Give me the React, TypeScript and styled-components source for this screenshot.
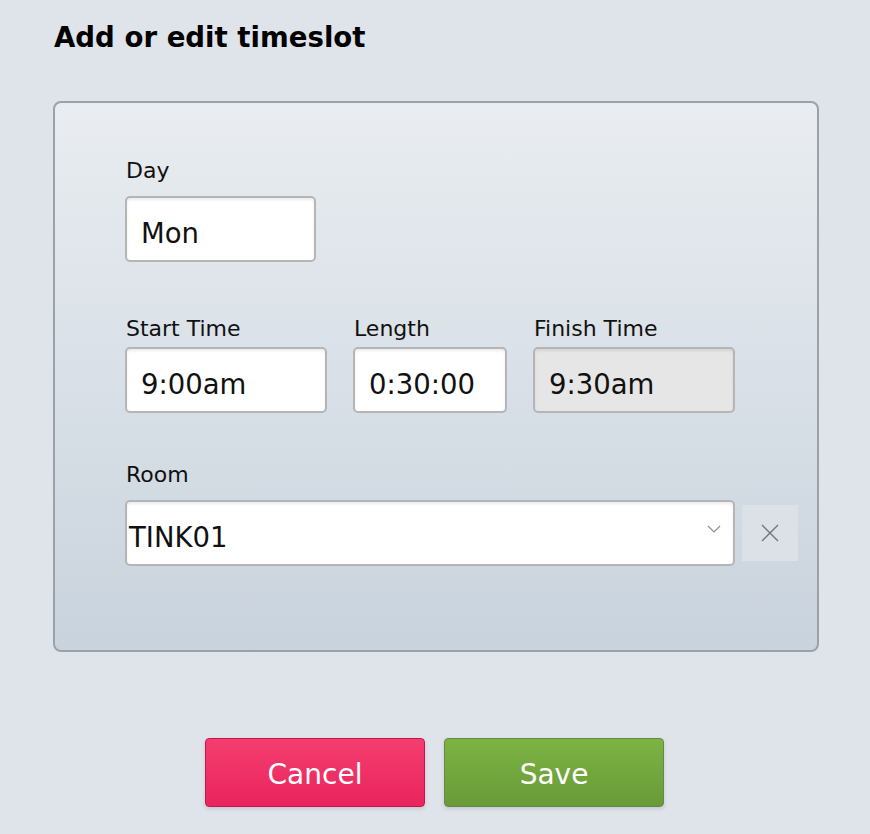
import styled, { createGlobalStyle } from 'styled-components';

const GlobalStyle = createGlobalStyle`
  html, body {
    margin: 0;
    padding: 0;
    background: #dfe3ea;
    font-family: 'DejaVu Sans', Verdana, sans-serif;
    color: #111;
  }
`;

const Page = styled.div`
  width: 870px;
  height: 834px;
  box-sizing: border-box;
  padding: 22px 51px 0 53px;
`;

const Title = styled.h1`
  margin: 0 0 0 1px;
  font-size: 27.6px;
  line-height: 32px;
  font-weight: bold;
  color: #000;
`;

const Panel = styled.div`
  margin-top: 47px;
  height: 551px;
  box-sizing: border-box;
  border: 2px solid #9aa1a8;
  border-radius: 8px;
  background: linear-gradient(to bottom, #e9edf1 0%, #c9d3dd 100%);
  padding: 53px 0 0 70px;
`;

const Row = styled.div<{ $top?: number }>`
  display: flex;
  align-items: flex-end;
  gap: 26px;
  margin-top: ${(p) => p.$top ?? 0}px;
`;

const Field = styled.div`
  display: flex;
  flex-direction: column;
`;

const Label = styled.label<{ $gap?: number }>`
  font-size: 22px;
  line-height: 26px;
  padding-top: 2px;
  margin: 0 0 ${(p) => p.$gap ?? 12}px 1px;
  color: #111;
`;

const Input = styled.div<{ $w: number; $disabled?: boolean }>`
  width: ${(p) => p.$w}px;
  height: 66px;
  box-sizing: border-box;
  border: 2px solid #b5b5b5;
  border-radius: 5px;
  background: ${(p) => (p.$disabled ? '#e6e6e6' : '#fff')};
  box-shadow: inset 0 2px 3px rgba(0, 0, 0, 0.08);
  display: flex;
  align-items: center;
  padding: 7px 14px 0;
  font-size: 27.5px;
  color: #111;
`;

const SelectRow = styled.div`
  display: flex;
  align-items: center;
  gap: 7px;
`;

const Select = styled(Input)`
  justify-content: space-between;
  padding: 7px 12px 0 2px;
`;

const Chevron = styled.svg`
  align-self: flex-start;
  margin-top: 16px;
`;

const ClearButton = styled.div`
  width: 56px;
  height: 56px;
  background: #dce1e8;
  display: flex;
  align-items: center;
  justify-content: center;
`;

const Buttons = styled.div`
  display: flex;
  justify-content: center;
  gap: 19px;
  margin: 86px 0 0 -3px;
`;

const Button = styled.button<{ $variant: 'cancel' | 'save' }>`
  width: 220px;
  height: 69px;
  border-radius: 4px;
  font-family: 'DejaVu Sans', Verdana, sans-serif;
  font-size: 28px;
  color: #fff;
  padding-top: 4px;
  cursor: pointer;
  box-shadow: 0 2px 4px rgba(0, 0, 0, 0.12);
  border: 1.5px solid ${(p) => (p.$variant === 'cancel' ? '#c4164c' : '#66884a')};
  background: ${(p) =>
    p.$variant === 'cancel'
      ? 'linear-gradient(to bottom, #f43e6f, #e9245e)'
      : 'linear-gradient(to bottom, #7cb443, #699a38)'};
`;

export default function App() {
  return (
    <Page>
      <GlobalStyle />
      <Title>Add or edit timeslot</Title>
      <Panel>
        <Field>
          <Label>Day</Label>
          <Input $w={191}>Mon</Input>
        </Field>
        <Row $top={52}>
          <Field>
            <Label $gap={5}>Start Time</Label>
            <Input $w={202}>9:00am</Input>
          </Field>
          <Field>
            <Label $gap={5}>Length</Label>
            <Input $w={154}>0:30:00</Input>
          </Field>
          <Field>
            <Label $gap={5}>Finish Time</Label>
            <Input $w={202} $disabled>
              9:30am
            </Input>
          </Field>
        </Row>
        <Row $top={47}>
          <Field>
            <Label>Room</Label>
            <SelectRow>
              <Select $w={610}>
                <span>TINK01</span>
                <Chevron width="14" height="8" viewBox="0 0 14 8">
                  <path d="M1 1 L7 7 L13 1" fill="none" stroke="#8a8f96" strokeWidth="1.2" />
                </Chevron>
              </Select>
              <ClearButton>
                <svg width="20" height="20" viewBox="0 0 20 20">
                  <path d="M2 2 L18 18 M18 2 L2 18" stroke="#6f7780" strokeWidth="1.4" />
                </svg>
              </ClearButton>
            </SelectRow>
          </Field>
        </Row>
      </Panel>
      <Buttons>
        <Button $variant="cancel">Cancel</Button>
        <Button $variant="save">Save</Button>
      </Buttons>
    </Page>
  );
}
